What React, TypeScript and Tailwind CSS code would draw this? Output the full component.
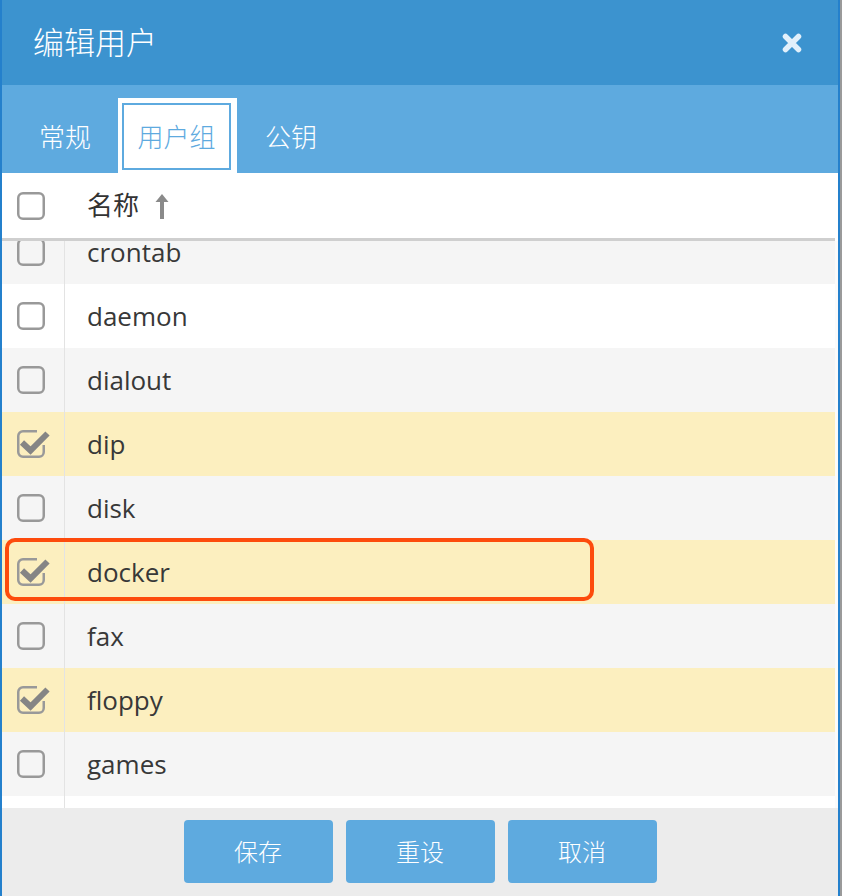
import React from "react";

const rows = [
  { name: "crontab", checked: false },
  { name: "daemon", checked: false },
  { name: "dialout", checked: false },
  { name: "dip", checked: true },
  { name: "disk", checked: false },
  { name: "docker", checked: true },
  { name: "fax", checked: false },
  { name: "floppy", checked: true },
  { name: "games", checked: false },
  { name: "", checked: false },
];

function Checkbox({ checked }: { checked?: boolean }) {
  if (checked) {
    return (
      <svg width="28" height="28" viewBox="0 0 28 28" className="overflow-visible">
        <path
          d="M20 1.25 H6 a4.75 4.75 0 0 0 -4.75 4.75 V22 a4.75 4.75 0 0 0 4.75 4.75 H22 a4.75 4.75 0 0 0 4.75 -4.75 V15"
          fill="none"
          stroke="#999"
          strokeWidth="2.5"
        />
        <path d="M5 12.5 L13.5 20.5 L30.5 3.5" fill="none" stroke="#858585" strokeWidth="6" />
      </svg>
    );
  }
  return (
    <svg width="28" height="28" viewBox="0 0 28 28">
      <rect x="1.25" y="1.25" width="25.5" height="25.5" rx="4.75" fill="none" stroke="#999" strokeWidth="2.5" />
    </svg>
  );
}

export default function App() {
  return (
    <div
      className="relative w-[842px] h-[896px] bg-[#9a9a9a] overflow-hidden"
      style={{ fontFamily: "'Open Sans', 'Noto Sans CJK SC', sans-serif" }}
    >
      <div className="w-[840px] h-full border-x-2 border-[#2480cc] flex flex-col bg-white">
        {/* title */}
        <div className="h-[85px] bg-[#3c93cf] flex items-center justify-between pl-[31px] pr-[36px] shrink-0">
          <span className="text-white text-[31px] font-light leading-none">编辑用户</span>
          <svg width="20" height="20" viewBox="0 0 20 20">
            <path d="M3.5 3.5 L16.5 16.5 M16.5 3.5 L3.5 16.5" stroke="#e2f0fb" strokeWidth="5.5" strokeLinecap="round" />
          </svg>
        </div>

        {/* tabs */}
        <div className="h-[88px] bg-[#5eaadf] flex items-end pl-[37px] shrink-0 text-[26px] font-light leading-none">
          <div className="h-[75px] flex items-center pt-[5px] pb-[3px] text-white">常规</div>
          <div className="ml-[27px] w-[119px] h-[75px] bg-white pt-[5px] pb-[3px] pl-[4px] pr-[6px]">
            <div className="h-full border-2 border-[#5eaadf] flex items-center justify-center text-[#5eaadf]">
              用户组
            </div>
          </div>
          <div className="ml-[28px] h-[75px] flex items-center pt-[5px] pb-[3px] text-white">公钥</div>
        </div>

        {/* table header */}
        <div className="h-[68px] shrink-0 bg-white pr-[3px]">
          <div className="h-full flex items-center border-b-[3px] border-[#cfcfcf]">
            <div className="w-[63px] pl-[15px] flex items-center">
              <Checkbox />
            </div>
            <div className="pl-[22px] flex items-center text-[26px] text-[#333]">
              <span>名称</span>
              <svg width="14" height="26" viewBox="0 0 14 26" className="ml-[16px]">
                <path d="M7 1 L13.5 9 H9 V26 H5 V9 H0.5 Z" fill="#8a8a8a" />
              </svg>
            </div>
          </div>
        </div>

        {/* table body */}
        <div className="flex-1 overflow-hidden bg-[#fbfbfb] pr-[3px]">
          <div className="-mt-[21px]">
            {rows.map((row, i) => (
              <div
                key={i}
                className={
                  "h-[64px] flex items-stretch " +
                  (row.checked ? "bg-[#fcefbf]" : i % 2 === 0 ? "bg-[#f5f5f5]" : "bg-white")
                }
              >
                <div className="w-[63px] pl-[15px] flex items-center border-r border-[#e3e3e3]">
                  {row.name && <Checkbox checked={row.checked} />}
                </div>
                <div className="pl-[22px] flex items-center text-[26px] text-[#383838]">{row.name}</div>
              </div>
            ))}
          </div>
        </div>

        {/* footer */}
        <div className="h-[88px] shrink-0 bg-[#ececec] flex justify-center gap-[13px] pt-[12px]">
          {["保存", "重设", "取消"].map((label) => (
            <button
              key={label}
              className="w-[149px] h-[63px] rounded-[4px] bg-[#5eaadf] text-white text-[24px] font-light"
            >
              {label}
            </button>
          ))}
        </div>
      </div>

      {/* highlight annotation */}
      <div className="absolute left-[5px] top-[538px] w-[589px] h-[63px] border-[4px] border-[#fd4b0c] rounded-[10px]" />
    </div>
  );
}
